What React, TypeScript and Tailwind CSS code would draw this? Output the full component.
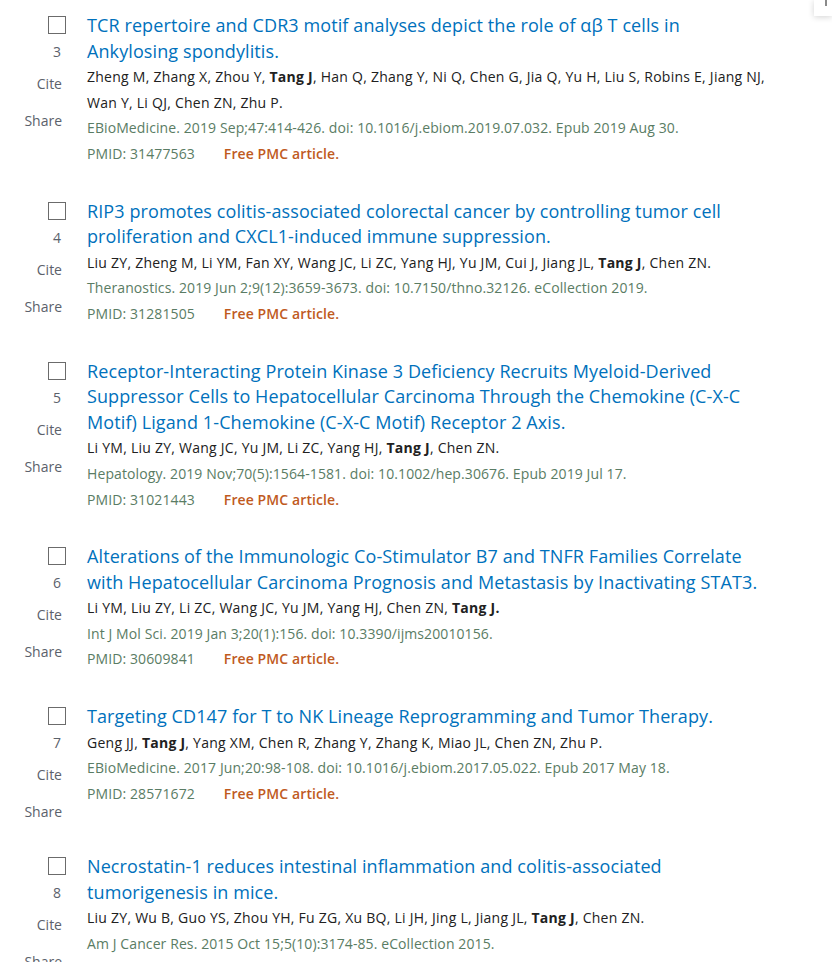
import React from 'react';

type Article = {
  num: number;
  title: string;
  authors: string[];
  citation: string;
  pmid: string;
};

const articles: Article[] = [
  {
    num: 3,
    title: 'TCR repertoire and CDR3 motif analyses depict the role of αβ T cells in Ankylosing spondylitis.',
    authors: ['Zheng M, Zhang X, Zhou Y, ', 'Tang J', ', Han Q, Zhang Y, Ni Q, Chen G, Jia Q, Yu H, Liu S, Robins E, Jiang NJ, Wan Y, Li QJ, Chen ZN, Zhu P.'],
    citation: 'EBioMedicine. 2019 Sep;47:414-426. doi: 10.1016/j.ebiom.2019.07.032. Epub 2019 Aug 30.',
    pmid: '31477563',
  },
  {
    num: 4,
    title: 'RIP3 promotes colitis-associated colorectal cancer by controlling tumor cell proliferation and CXCL1-induced immune suppression.',
    authors: ['Liu ZY, Zheng M, Li YM, Fan XY, Wang JC, Li ZC, Yang HJ, Yu JM, Cui J, Jiang JL, ', 'Tang J', ', Chen ZN.'],
    citation: 'Theranostics. 2019 Jun 2;9(12):3659-3673. doi: 10.7150/thno.32126. eCollection 2019.',
    pmid: '31281505',
  },
  {
    num: 5,
    title: 'Receptor-Interacting Protein Kinase 3 Deficiency Recruits Myeloid-Derived Suppressor Cells to Hepatocellular Carcinoma Through the Chemokine (C-X-C Motif) Ligand 1-Chemokine (C-X-C Motif) Receptor 2 Axis.',
    authors: ['Li YM, Liu ZY, Wang JC, Yu JM, Li ZC, Yang HJ, ', 'Tang J', ', Chen ZN.'],
    citation: 'Hepatology. 2019 Nov;70(5):1564-1581. doi: 10.1002/hep.30676. Epub 2019 Jul 17.',
    pmid: '31021443',
  },
  {
    num: 6,
    title: 'Alterations of the Immunologic Co-Stimulator B7 and TNFR Families Correlate with Hepatocellular Carcinoma Prognosis and Metastasis by Inactivating STAT3.',
    authors: ['Li YM, Liu ZY, Li ZC, Wang JC, Yu JM, Yang HJ, Chen ZN, ', 'Tang J.', ''],
    citation: 'Int J Mol Sci. 2019 Jan 3;20(1):156. doi: 10.3390/ijms20010156.',
    pmid: '30609841',
  },
  {
    num: 7,
    title: 'Targeting CD147 for T to NK Lineage Reprogramming and Tumor Therapy.',
    authors: ['Geng JJ, ', 'Tang J', ', Yang XM, Chen R, Zhang Y, Zhang K, Miao JL, Chen ZN, Zhu P.'],
    citation: 'EBioMedicine. 2017 Jun;20:98-108. doi: 10.1016/j.ebiom.2017.05.022. Epub 2017 May 18.',
    pmid: '28571672',
  },
  {
    num: 8,
    title: 'Necrostatin-1 reduces intestinal inflammation and colitis-associated tumorigenesis in mice.',
    authors: ['Liu ZY, Wu B, Guo YS, Zhou YH, Fu ZG, Xu BQ, Li JH, Jing L, Jiang JL, ', 'Tang J', ', Chen ZN.'],
    citation: 'Am J Cancer Res. 2015 Oct 15;5(10):3174-85. eCollection 2015.',
    pmid: '26693068',
  },
];

const ResultItem = ({ a }: { a: Article }) => (
  <article className="flex pb-[32px]">
    <div className="w-[66px] shrink-0 flex flex-col items-end">
      <span className="mt-[3px] w-[18px] h-[18px] border-[1.5px] border-[#6b6b6b] bg-white" />
      <span className="mt-[8px] mr-[5px] text-[14px] leading-[20px] text-[#5b616b]">{a.num}</span>
      <button className="mt-[12px] mr-[4px] text-[14px] leading-[20px] text-[#5b616b]">Cite</button>
      <button className="mt-[17px] mr-[4px] text-[14px] leading-[20px] text-[#5b616b]">Share</button>
    </div>
    <div className="ml-[21px] w-[683px]">
      <a href="#" className="block text-[18px] leading-[25.6px] tracking-[0.1px] text-[#0071bc] hover:underline">
        {a.title}
      </a>
      <div className="text-[14px] leading-[25.6px] tracking-[0.25px] text-[#212121]">
        {a.authors[0]}
        <b className="font-bold">{a.authors[1]}</b>
        {a.authors[2]}
      </div>
      <div className="text-[14px] leading-[25.6px] tracking-[0.1px] text-[#5a7c64]">{a.citation}</div>
      <div className="text-[14px] leading-[25.6px] tracking-[0.1px]">
        <span className="mr-[29px] text-[#5a7c64]">PMID: {a.pmid}</span>
        <span className="font-semibold text-[#c05a1e]">Free PMC article.</span>
      </div>
    </div>
  </article>
);

export default function App() {
  return (
    <div className="relative min-h-screen bg-white overflow-hidden font-['Open_Sans',sans-serif]">
      <div className="absolute top-0 right-0 w-[18px] h-[16px] bg-white shadow-[0_1px_6px_rgba(0,0,0,0.18)]">
        <span className="absolute top-0 left-[11px] w-[2px] h-[6px] bg-[#8a8a8a]" />
      </div>
      <div className="pt-[13px]">
        {articles.map((a) => (
          <ResultItem key={a.num} a={a} />
        ))}
      </div>
    </div>
  );
}
